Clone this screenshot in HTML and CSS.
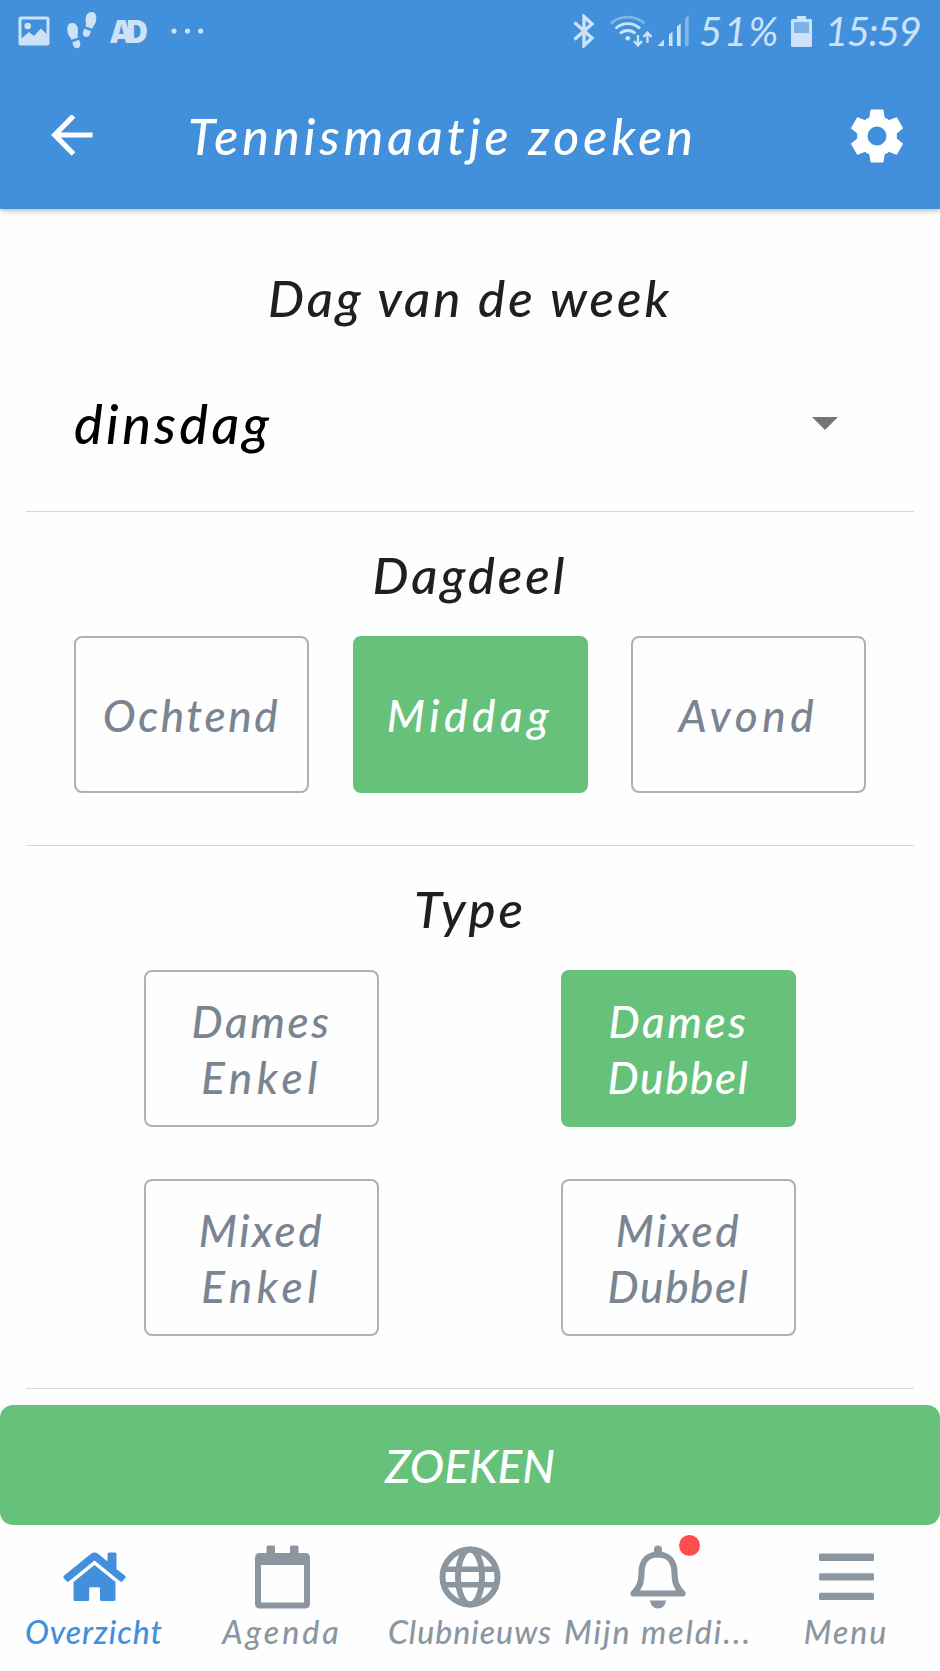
FILE: index.html
```
<!DOCTYPE html>
<html lang="nl">
<head>
    <meta charset="UTF-8">
    <title>Tennismaatje zoeken</title>
    <link rel="stylesheet" href="styles.css">
</head>
<body>
    <header class="header">
        <!-- Phone status bar -->
        <div class="status-bar">
            <div class="status-left">
                <svg class="icon-image" width="32" height="31" viewBox="0 0 32 31">
                    <path fill="currentColor" fill-rule="evenodd" d="M3 0.5h26a2.5 2.5 0 0 1 2.500 2.500v24a2.500 2.500 0 0 1-2.500 2.500h-26a2.500 2.500 0 0 1-2.500-2.500v-24a2.500 2.500 0 0 1 2.500-2.500zM3.500 3.500v19l7.500-6.500 5 4 7-7.500 5.500 5.500v-14.500z"/>
                    <circle cx="9.700" cy="10" r="3.300" fill="currentColor"/>
                </svg>
                <svg class="icon-steps" width="30" height="38" viewBox="0 0 30 38">
                    <g fill="currentColor">
                        <path d="M5 11C1.500 11 0 14.500 0.300 18.500c.3 4 2.600 6 4.200 9.300l6.300-2c-.8-3 .6-5 .2-8.500C10.600 13.500 8.500 11 5 11z"/>
                        <path d="M5.400 30.200l6.600-2.400c1.500 3 2 5.800.2 7.600-2.400 1.800-5.200.400-6-2z"/>
                        <path d="M25 0c3.500.2 4.800 4 4.300 8-.5 3.700-2.600 5.600-4.200 8.800l-6.400-2.200c1-3-.3-5-.1-8C18.900 2.500 21.500 0 25 0z"/>
                        <path d="M24 19.200l-6.500-2.400c-1.600 2.400-2.500 5-.8 7 2.400 2.200 5 1.200 6-1.300z"/>
                    </g>
                </svg>
                <span class="ad-logo">AD</span>
                <svg class="icon-dots" width="34" height="6" viewBox="0 0 34 6">
                    <g fill="currentColor">
                        <circle cx="3" cy="3" r="2.600"/>
                        <circle cx="16.500" cy="3" r="2.600"/>
                        <circle cx="29.700" cy="3" r="2.600"/>
                    </g>
                </svg>
            </div>
            <div class="status-right">
                <svg class="icon-bluetooth" width="22" height="34" viewBox="0 0 22 34">
                    <path fill="none" stroke="currentColor" stroke-width="3.400" d="M1.500 8.500l17.500 15.500-8 7.500V2.500l8 7.500L1.500 25.500"/>
                </svg>
                <svg class="icon-wifi" width="43" height="33" viewBox="0 0 43 33">
                    <g fill="none" stroke="currentColor" stroke-width="2.800">
                        <path opacity="0.450" d="M1 8.500C10 0 25 0 34.500 8.500"/>
                        <path d="M5.500 13.500c7-6.500 17.500-6.500 24.500 0"/>
                        <path d="M10 18.500c4.500-4 11-4 15.500 0"/>
                        <path stroke-width="2.300" d="M28 20v10M24 26l4 4.500 4-4.500M37.500 28V18M33.500 22l4-4.500 4 4.500"/>
                    </g>
                    <circle cx="17.800" cy="23.300" r="2.400" fill="currentColor"/>
                </svg>
                <svg class="icon-signal" width="33" height="32" viewBox="0 0 33 32">
                    <g fill="currentColor">
                        <path d="M0.500 31l6.500-6.500V31z"/>
                        <path d="M12 31V19.500l3.500-3V31z"/>
                        <path d="M20 31V11.500l3.700-3V31z"/>
                        <path opacity="0.450" d="M28 31V3.500L31.700 0v31z"/>
                    </g>
                </svg>
                <span class="battery-text">51%</span>
                <svg class="icon-battery" width="21" height="31" viewBox="0 0 21 31">
                    <path fill="currentColor" d="M6 0h9v3h4.500a1.500 1.500 0 0 1 1.500 1.500V29.500a1.500 1.500 0 0 1-1.500 1.500h-18a1.500 1.500 0 0 1-1.500-1.500V4.500a1.500 1.500 0 0 1 1.500-1.500H6z"/>
                    <rect x="3" y="6" width="15" height="11" fill="#7bb1e6"/>
                </svg>
                <span class="clock">15:59</span>
            </div>
        </div>

        <!-- App bar -->
        <div class="app-bar">
            <svg class="back" width="42" height="42" viewBox="0 0 42 42">
                <path fill="none" stroke="currentColor" stroke-width="5.200" d="M41.500 20H5M22.500 1L3.700 20l18.800 19"/>
            </svg>
            <h1>Tennismaatje zoeken</h1>
            <svg class="settings" width="54" height="54" viewBox="-27 -27 54 54">
                <circle r="14.700" fill="none" stroke="currentColor" stroke-width="10.400"/>
                <g fill="currentColor" stroke="currentColor" stroke-linejoin="round">
                    <path d="M-7.500-16l1.500-10H6l1.500 10z"/>
                    <path transform="rotate(60)" d="M-7.500-16l1.500-10H6l1.500 10z"/>
                    <path transform="rotate(120)" d="M-7.500-16l1.500-10H6l1.500 10z"/>
                    <path transform="rotate(180)" d="M-7.500-16l1.500-10H6l1.500 10z"/>
                    <path transform="rotate(240)" d="M-7.500-16l1.500-10H6l1.500 10z"/>
                    <path transform="rotate(300)" d="M-7.500-16l1.500-10H6l1.500 10z"/>
                </g>
            </svg>
        </div>
    </header>

    <main>
        <section class="section section-day">
            <h2>Dag van de week</h2>
            <div class="select">
                <span>dinsdag</span>
                <svg width="26" height="13" viewBox="0 0 26 13">
                    <path fill="#757575" d="M0 0h26L13 13z"/>
                </svg>
            </div>
        </section>

        <section class="section">
            <h2>Dagdeel</h2>
            <div class="options">
                <button class="option">Ochtend</button>
                <button class="option selected"><span class="wide">Middag</span></button>
                <button class="option"><span class="wide">Avond</span></button>
            </div>
        </section>

        <section class="section">
            <h2>Type</h2>
            <div class="options options-type">
                <button class="option">Dames<br><span class="wide">Enkel</span></button>
                <button class="option selected">Dames<br><span class="narrow">Dubbel</span></button>
                <button class="option">Mixed<br><span class="wide">Enkel</span></button>
                <button class="option">Mixed<br><span class="narrow">Dubbel</span></button>
            </div>
        </section>
    </main>

    <button class="search-button">ZOEKEN</button>

    <!-- Bottom tabs -->
    <nav class="tabs">
        <a class="tab active">
            <span class="tab-icon">
                <svg width="63" height="64" viewBox="0 0 63 64">
                    <g fill="currentColor">
                        <path d="M1.200 30.500L28 8.800q3.500-2.600 7 0l9.500 7.600V9q0-1.500 1.500-1.500h6q1.500 0 1.500 1.500v15l8.300 6.500q1.500 1.300.3 2.700l-2.600 3q-1.200 1.200-2.500.1L31.500 15.500 6 36.300q-1.300 1.100-2.500-.1l-2.600-3q-1.200-1.400.3-2.700z"/>
                        <path d="M31.500 20l21 17v17.500q0 1.500-1.500 1.500H38.500q-1.500 0-1.500-1.500V43.500q0-1.300-1.300-1.300h-8.200q-1.300 0-1.300 1.300v11q0 1.500-1.500 1.500H12q-1.500 0-1.500-1.500V37z"/>
                    </g>
                </svg>
            </span>
            <span class="label">Overzicht</span>
        </a>
        <a class="tab">
            <span class="tab-icon">
                <svg width="55" height="64" viewBox="0 0 55 64">
                    <path fill="currentColor" fill-rule="evenodd" d="M11.500 8V2q0-1.500 1.500-1.500h5.500q1.500 0 1.500 1.500v6h15V2q0-1.500 1.500-1.500H42q1.500 0 1.500 1.500v6H50q5 0 5 5v45.500q0 5-5 5H5q-5 0-5-5V13q0-5 5-5zM6 20v37.500h43V20z"/>
                </svg>
            </span>
            <span class="label wide">Agenda</span>
        </a>
        <a class="tab">
            <span class="tab-icon">
                <svg width="62" height="64" viewBox="0 0 62 64">
                    <g fill="none" stroke="currentColor" stroke-width="6">
                        <circle cx="31" cy="32" r="27.500"/>
                        <ellipse cx="31" cy="32" rx="12" ry="27.500"/>
                        <path stroke-width="5.500" d="M4 24.200h54M4 39.800h54"/>
                    </g>
                </svg>
            </span>
            <span class="label">Clubnieuws</span>
        </a>
        <a class="tab">
            <span class="tab-icon">
                <svg width="56" height="64" viewBox="0 0 56 64">
                    <path fill="none" stroke="currentColor" stroke-width="6.200" stroke-linejoin="round" d="M3.500 48.500C10 42 11.300 37 11.500 27.500 11.700 16 18 9.500 28 9.500S44.300 16 44.500 27.500C44.700 37 46 42 52.500 48.500z"/>
                    <path fill="none" stroke="currentColor" stroke-width="8" stroke-linecap="round" d="M28 4.500v4"/>
                    <path fill="currentColor" d="M20 55.500h16c-.5 5-4 8-8 8s-7.500-3-8-8z"/>
                </svg>
                <span class="badge"></span>
            </span>
            <span class="label medium">Mijn meldi...</span>
        </a>
        <a class="tab">
            <span class="tab-icon">
                <svg width="55" height="64" viewBox="0 0 55 64">
                    <g fill="currentColor">
                        <rect y="8.600" width="55" height="7.300" rx="1.500"/>
                        <rect y="28.200" width="55" height="7.300" rx="1.500"/>
                        <rect y="47.800" width="55" height="7.300" rx="1.500"/>
                    </g>
                </svg>
            </span>
            <span class="label medium">Menu</span>
        </a>
    </nav>
</body>
</html>
```
FILE: styles.css
```
* {
    box-sizing: border-box;
}
body {
    font-family: Lato, "Open Sans", sans-serif;
    font-style: italic;
    margin: 0;
    padding: 0;
    width: 940px;
    height: 1671px;
    overflow: hidden;
    background: #fefefe;
}
svg {
    display: block;
    flex-shrink: 0;
}
h1, h2 {
    margin: 0;
    font-weight: 500;
}
button {
    font-family: inherit;
    font-style: inherit;
    font-weight: 500;
    padding: 0;
    cursor: pointer;
}

/* Header */
.header {
    height: 209px;
    background: #4290db;
    color: #fff;
    box-shadow: 0 1px 6px rgba(0, 0, 0, 0.35);
}
.status-bar {
    height: 62px;
    padding: 0 13px 0 18px;
    display: flex;
    justify-content: space-between;
    color: #cde2f6;
}
.status-left,
.status-right {
    display: flex;
    align-items: center;
    height: 62px;
}
.icon-steps {
    margin-left: 17px;
}
.ad-logo {
    margin-left: 13px;
    width: 37px;
    font-family: "Open Sans", sans-serif;
    font-style: normal;
    font-weight: 800;
    font-size: 31px;
    letter-spacing: -7px;
}
.icon-dots {
    margin-left: 24px;
}
.icon-wifi {
    margin-left: 15px;
}
.icon-signal {
    margin-left: 4px;
}
.battery-text,
.clock {
    font-size: 40px;
    line-height: 62px;
}
.battery-text {
    width: 92px;
    margin-left: 9px;
    letter-spacing: 1.5px;
}
.clock {
    width: 102px;
    margin-left: 13px;
    letter-spacing: -1.5px;
}
.app-bar {
    height: 147px;
    padding: 0 36px 0 51px;
    display: flex;
    align-items: center;
}
h1 {
    flex: 1;
    margin-left: 95px;
    font-size: 50px;
    letter-spacing: 4.1px;
    white-space: nowrap;
}

/* Form sections */
.section {
    margin: 0 26px;
    padding: 33px 0 52px;
    border-bottom: 1px solid #d6d8da;
}
.section-day {
    padding: 59px 0 0;
}
h2 {
    text-align: center;
    font-size: 51px;
    line-height: 60px;
    letter-spacing: 3px;
    color: #1c2022;
}
.select {
    height: 183px;
    padding: 7px 76px 0 48px;
    display: flex;
    align-items: center;
    justify-content: space-between;
    font-size: 54px;
    font-weight: 500;
    letter-spacing: 3.4px;
    color: #000;
}
.options {
    display: grid;
    grid-template-columns: repeat(3, 235px);
    justify-content: center;
    gap: 52px 43.5px;
    margin-top: 31px;
}
.options-type {
    grid-template-columns: repeat(2, 235px);
    column-gap: 182px;
}
.option {
    height: 157px;
    border: 2.5px solid #a8b2bc;
    border-radius: 8px;
    background: #fefefe;
    color: #7a8591;
    font-size: 44px;
    line-height: 56px;
    letter-spacing: 2.6px;
}
.option.selected {
    background: #66c27a;
    border-color: #66c27a;
    color: #fff;
}
.option .wide {
    letter-spacing: 4.6px;
}
.option .narrow {
    letter-spacing: 1.6px;
}
.search-button {
    display: block;
    width: 100%;
    height: 120px;
    margin-top: 16px;
    border: none;
    border-radius: 13px;
    background: #66c27a;
    color: #fff;
    font-size: 46px;
}

/* Bottom tabs */
.tabs {
    display: grid;
    grid-template-columns: repeat(5, 1fr);
    height: 146px;
    padding-top: 20px;
}
.tab {
    display: flex;
    flex-direction: column;
    align-items: center;
    color: #8b96a1;
}
.tab.active {
    color: #4290db;
}
.tab-icon {
    position: relative;
}
.label {
    margin-top: 3px;
    font-size: 32px;
    font-weight: 500;
    line-height: 40px;
    letter-spacing: 1px;
    white-space: nowrap;
}
.label.wide {
    letter-spacing: 3px;
}
.label.medium {
    letter-spacing: 2px;
}
.badge {
    position: absolute;
    top: -10px;
    right: -14px;
    width: 21px;
    height: 21px;
    border-radius: 50%;
    background: #ff4d4f;
}
```
